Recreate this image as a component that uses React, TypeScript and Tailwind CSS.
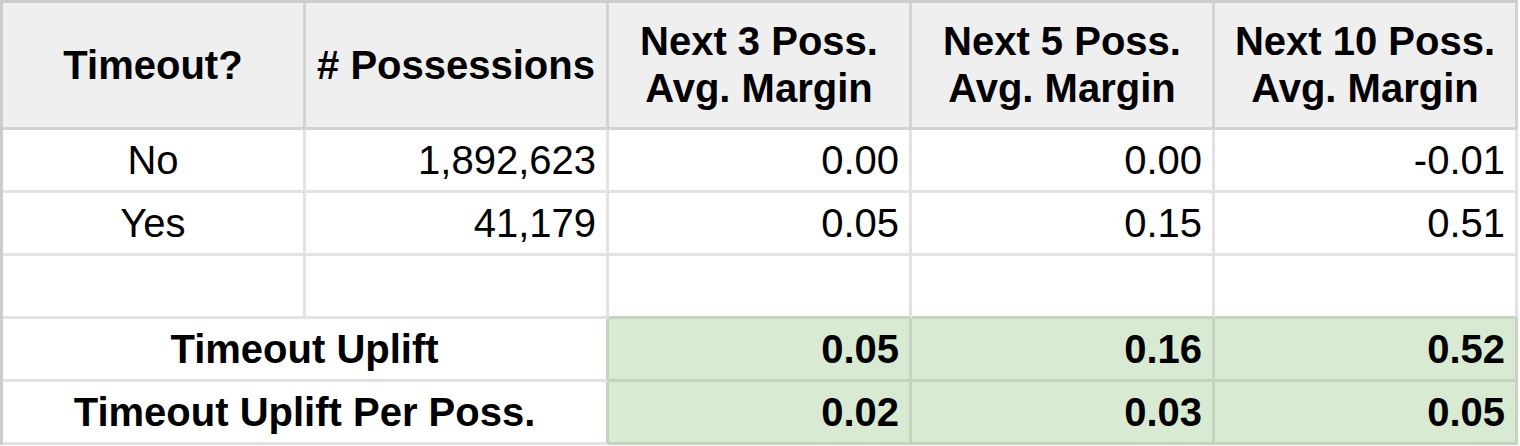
const HEAD_COLS = [
  { label: "Timeout?", two: false },
  { label: "# Possessions", two: false },
  { label: "Next 3 Poss.|Avg. Margin", two: true },
  { label: "Next 5 Poss.|Avg. Margin", two: true },
  { label: "Next 10 Poss.|Avg. Margin", two: true },
];

const ROWS = [
  ["No", "1,892,623", "0.00", "0.00", "-0.01"],
  ["Yes", "41,179", "0.05", "0.15", "0.51"],
];

const UPLIFT = [
  { label: "Timeout Uplift", values: ["0.05", "0.16", "0.52"] },
  { label: "Timeout Uplift Per Poss.", values: ["0.02", "0.03", "0.05"] },
];

export default function App() {
  return (
    <div
      className="bg-white h-[446px] w-[1520px] overflow-hidden text-black text-[40px]"
      style={{ fontFamily: '"Liberation Sans", Arial, sans-serif' }}
    >
      <div className="w-[1518px] border-t-[3px] border-l-[3px] border-[#cccccc] grid grid-cols-[repeat(5,303px)] grid-rows-[127px_63px_63px_63px_63px_63px]">
        {/* header */}
        {HEAD_COLS.map((h, i) => (
          <div
            key={i}
            className="bg-[#efefef] border-r-[3px] border-b-[3px] border-[#d3d3d3] flex flex-col items-center justify-center font-bold text-center leading-[47px]"
          >
            {h.label.split("|").map((l) => (
              <span key={l}>{l}</span>
            ))}
          </div>
        ))}

        {/* data rows */}
        {ROWS.map((r, ri) =>
          r.map((v, ci) => (
            <div
              key={ri + "-" + ci}
              className={
                "border-r-[3px] border-b-[3px] border-[#e2e2e2] flex items-center " +
                (ci === 0 ? "justify-center" : "justify-end pr-[10px]")
              }
            >
              {v}
            </div>
          ))
        )}

        {/* empty row */}
        {[0, 1, 2, 3, 4].map((ci) => (
          <div
            key={"e" + ci}
            className={
              ci < 2
                ? "border-r-[3px] border-b-[3px] border-[#e2e2e2]"
                : "border-r-[3px] border-b-[3px] border-r-[#e2e2e2] border-b-[#c3d5bd]"
            }
          />
        ))}

        {/* uplift rows */}
        {UPLIFT.map((u) => (
          <div key={u.label} className="contents">
            <div className="col-span-2 border-r-[3px] border-b-[3px] border-r-[#c3d5bd] border-b-[#e2e2e2] flex items-center justify-center font-bold">
              {u.label}
            </div>
            {u.values.map((v, i) => (
              <div
                key={i}
                className="bg-[#d9ead3] border-r-[3px] border-b-[3px] border-[#c3d5bd] flex items-center justify-end pr-[10px] font-bold"
              >
                {v}
              </div>
            ))}
          </div>
        ))}
      </div>
    </div>
  );
}
